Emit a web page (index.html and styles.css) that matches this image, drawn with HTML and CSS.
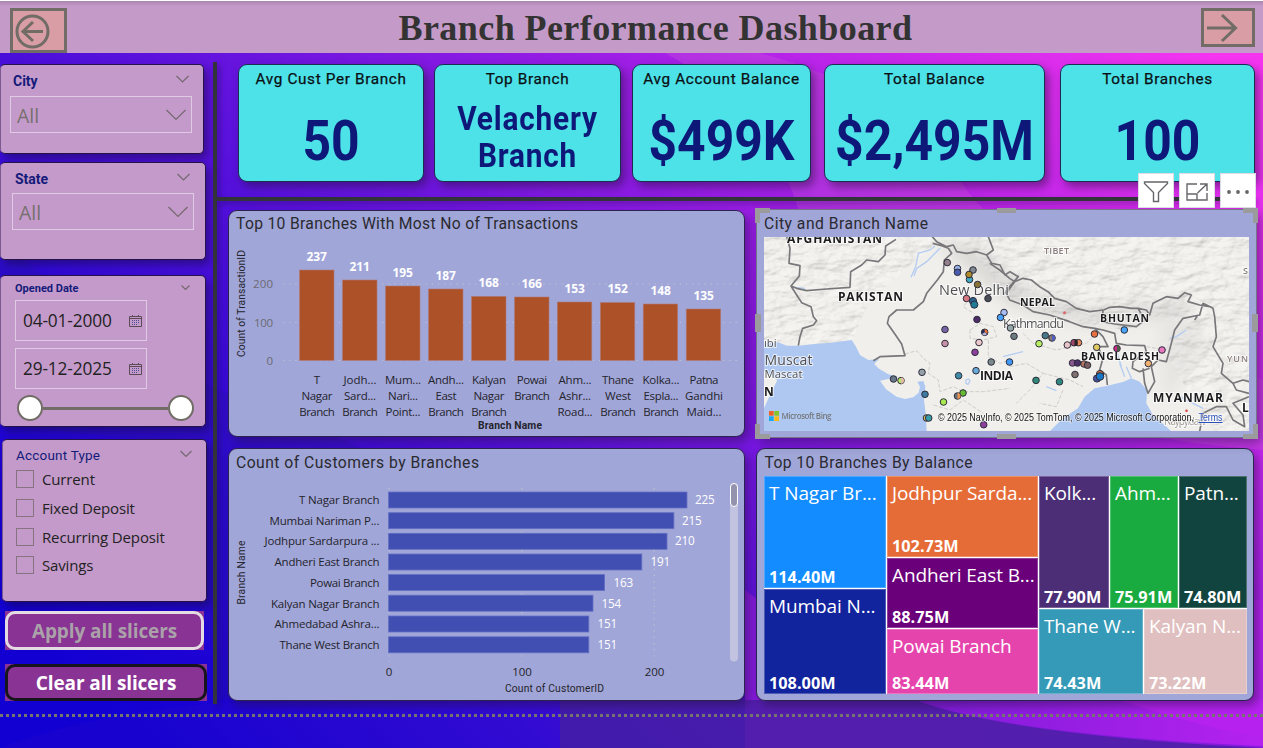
FILE: index.html
```html
<!DOCTYPE html>
<html lang="en">
<head>
<meta charset="utf-8">
<title>Branch Performance Dashboard</title>
<link rel="stylesheet" href="styles.css">
</head>
<body>
<svg class="backdrop" viewBox="0 0 1263 748" preserveAspectRatio="none">
  <defs>
    <linearGradient id="bg" gradientUnits="userSpaceOnUse" x1="150" y1="748" x2="1000" y2="-150">
      <stop offset="0" stop-color="#1200d2"/><stop offset=".22" stop-color="#3009d6"/><stop offset=".45" stop-color="#6614de"/><stop offset=".68" stop-color="#a21fe6"/><stop offset="1" stop-color="#f534f0"/>
    </linearGradient>
    <linearGradient id="wave" x1="0" y1="0" x2="1" y2="0"><stop offset="0" stop-color="#3a12c0"/><stop offset="1" stop-color="#47219c"/></linearGradient>
    <linearGradient id="glow" x1="0" y1="0" x2="1" y2="0"><stop offset="0" stop-color="#7c1bd8"/><stop offset="1" stop-color="#b522f0"/></linearGradient>
  </defs>
  <rect width="1263" height="748" fill="url(#bg)"/>
  <path d="M0 240Q80 310 213 388Q420 470 745 610L1000 700H213V650L150 440L0 425Z" fill="#2c14a8" opacity=".3"/>
  <path d="M665 53Q770 110 800 215Q880 420 1263 450V380Q1000 250 960 180Q900 90 760 53Z" fill="#d060d8" opacity=".28"/>
  <path d="M745 590Q900 710 1263 748H745Z" fill="#851bdc"/>
  <path d="M0 748Q150 690 420 700H910Q1000 735 1263 748Z" fill="url(#wave)" opacity=".12"/>
  <path d="M910 700Q1020 735 1263 746V700Z" fill="url(#glow)"/>
  <path d="M1120 700Q1180 722 1263 738V600H1120Z" fill="#b822f0" opacity=".8"/>
  <path d="M560 700H915Q1010 735 1263 748H560Z" fill="#46209f" opacity=".75"/>
</svg>

<header class="topbar">
  <button class="nav nav-back" aria-label="Back"><svg width="46" height="38" viewBox="0 0 46 38"><circle cx="19.500" cy="19.500" r="15.500"/><path d="M9.500 19.500H30M20 10L10 19.500L20 29"/></svg></button>
  <h1>Branch Performance Dashboard</h1>
  <button class="nav nav-next" aria-label="Next"><svg width="46" height="32" viewBox="0 0 46 32"><path d="M3 16H31M18 3L31.500 16L18 29"/></svg></button>
</header>

<main class="board">
  <aside class="sidebar">
    <section class="slicer city">
      <div class="slicer-head"><h2>City</h2><svg class="chev" width="13" height="8" viewBox="0 0 13 8"><path d="M.5 1L6.500 7L12.500 1"/></svg></div>
      <div class="dropdown"><span>All</span><svg class="chev" width="20" height="12" viewBox="0 0 20 12"><path d="M.5 1L10 10.500L19.500 1"/></svg></div>
    </section>
    <section class="slicer state">
      <div class="slicer-head"><h2>State</h2><svg class="chev" width="13" height="8" viewBox="0 0 13 8"><path d="M.5 1L6.500 7L12.500 1"/></svg></div>
      <div class="dropdown"><span>All</span><svg class="chev" width="20" height="12" viewBox="0 0 20 12"><path d="M.5 1L10 10.500L19.500 1"/></svg></div>
    </section>
    <section class="slicer opened">
      <div class="slicer-head"><h2>Opened Date</h2><svg class="chev" width="9" height="6" viewBox="0 0 9 6"><path d="M.5 .5L4.500 4.500L8.500 .5"/></svg></div>
      <div class="date"><span>04-01-2000</span><svg class="cal" width="13" height="12" viewBox="0 0 13 12"><path d="M.5 1.500H12.500V11.500H.5ZM.5 3.500H12.500M3.500 0V2M9.500 0V2"/><path class="dots" d="M3 5.500H11M3 7.500H11M3 9.500H9"/></svg></div>
      <div class="date"><span>29-12-2025</span><svg class="cal" width="13" height="12" viewBox="0 0 13 12"><path d="M.5 1.500H12.500V11.500H.5ZM.5 3.500H12.500M3.500 0V2M9.500 0V2"/><path class="dots" d="M3 5.500H11M3 7.500H11M3 9.500H9"/></svg></div>
      <div class="slider"><i></i><b></b><i></i></div>
    </section>
    <section class="slicer account">
      <div class="slicer-head"><h2>Account Type</h2><svg class="chev" width="12" height="8" viewBox="0 0 12 8"><path d="M.5 1L6 6.500L11.500 1"/></svg></div>
      <ul><li>Current</li><li>Fixed Deposit</li><li>Recurring Deposit</li><li>Savings</li></ul>
    </section>
    <div class="btn-wrap apply"><button><span>Apply all slicers</span></button></div>
    <div class="btn-wrap clear"><button><span>Clear all slicers</span></button></div>
  </aside>
  <div class="vline"></div>

  <div class="content">
    <div class="kpis">
      <article class="kpi k1"><h3>Avg Cust Per Branch</h3><p>50</p></article>
      <article class="kpi k2"><h3>Top Branch</h3><p class="name">Velachery<br>Branch</p></article>
      <article class="kpi k3"><h3>Avg Account Balance</h3><p>$499K</p></article>
      <article class="kpi k4"><h3>Total Balance</h3><p>$2,495M</p></article>
      <article class="kpi k5"><h3>Total Branches</h3><p>100</p></article>
    </div>
    <div class="hline"></div>
    <div class="charts">
      <section class="card">
        <svg class="plot" width="515" height="225" viewBox="229 211 515 225">
          <text class="ttl" x="236" y="229" textLength="342">Top 10 Branches With Most No of Transactions</text>
          <path class="grid" d="M283 284H738M283 322.500H738M283 360.500H738"/>
          <g class="bars-a">
            <rect x="299.500" y="270" width="34.500" height="90.500"/><rect x="342.500" y="280" width="34.500" height="80.500"/><rect x="385.500" y="286" width="34.500" height="74.500"/><rect x="428.500" y="289" width="34.500" height="71.500"/><rect x="471.500" y="296.300" width="34.500" height="64.200"/><rect x="514.500" y="297" width="34.500" height="63.500"/><rect x="557.300" y="302" width="34.500" height="58.500"/><rect x="600.300" y="302.500" width="34.500" height="58"/><rect x="643.200" y="304" width="34.500" height="56.500"/><rect x="686.200" y="309" width="34.500" height="51.500"/>
          </g>
          <g class="axis-y"><text x="273" y="288" textLength="20">200</text><text x="273" y="327" textLength="19">100</text><text x="273" y="365">0</text></g>
          <g class="vals">
            <text x="316.700" y="261">237</text><text x="359.700" y="271">211</text><text x="402.700" y="277">195</text><text x="445.700" y="280">187</text><text x="488.700" y="287">168</text><text x="531.700" y="288">166</text><text x="574.700" y="293">153</text><text x="617.700" y="293">152</text><text x="660.700" y="295">148</text><text x="703.700" y="300">135</text>
          </g>
          <g class="cats">
            <text x="317" y="384">T</text><text x="317" y="400" textLength="31">Nagar</text><text x="317" y="416" textLength="35.500">Branch</text>
            <text x="360" y="384" textLength="33">Jodh...</text><text x="360" y="400" textLength="32">Sard...</text><text x="360" y="416" textLength="35.500">Branch</text>
            <text x="403" y="384" textLength="36">Mum...</text><text x="403" y="400" textLength="30">Nari...</text><text x="403" y="416" textLength="35">Point...</text>
            <text x="446" y="384" textLength="36">Andh...</text><text x="446" y="400" textLength="21">East</text><text x="446" y="416" textLength="35.500">Branch</text>
            <text x="489" y="384" textLength="34">Kalyan</text><text x="489" y="400" textLength="31">Nagar</text><text x="489" y="416" textLength="35.500">Branch</text>
            <text x="532" y="384" textLength="30.500">Powai</text><text x="532" y="400" textLength="35.500">Branch</text>
            <text x="575" y="384" textLength="33">Ahm...</text><text x="575" y="400" textLength="32">Ashr...</text><text x="575" y="416" textLength="35">Road...</text>
            <text x="618" y="384" textLength="32">Thane</text><text x="618" y="400" textLength="26">West</text><text x="618" y="416" textLength="35.500">Branch</text>
            <text x="661" y="384" textLength="37">Kolka...</text><text x="661" y="400" textLength="35">Espla...</text><text x="661" y="416" textLength="35.500">Branch</text>
            <text x="704" y="384" textLength="29">Patna</text><text x="704" y="400" textLength="38">Gandhi</text><text x="704" y="416" textLength="35">Maid...</text>
          </g>
          <text class="axis-t" transform="translate(245 357) rotate(-90)" textLength="107">Count of TransactionID</text>
          <text class="axis-t heavy" x="478" y="429" textLength="64">Branch Name</text>
        </svg>
      </section>

      <section class="card map-card">
        <svg class="plot" width="499" height="227" viewBox="757 210 499 227">
          <defs>
            <clipPath id="view"><rect x="764" y="237" width="485" height="194"/></clipPath>
            <clipPath id="hills"><path d="M764 237H1249V431H1215L1190 395L1160 345L1190 325L1150 316L1130 330L1080 325L1010 300L975 255L940 240L870 300L850 345L764 343Z"/></clipPath>
            <filter id="relief" x="0" y="0" width="100%" height="100%"><feTurbulence type="fractalNoise" baseFrequency=".045 .09" numOctaves="4" seed="8"/><feDiffuseLighting surfaceScale="5" lighting-color="#fff"><feDistantLight azimuth="225" elevation="60"/></feDiffuseLighting></filter>
            <filter id="soft"><feGaussianBlur stdDeviation="7"/></filter>
          </defs>
          <text class="ttl" x="764" y="229" textLength="164">City and Branch Name</text>
          <g clip-path="url(#view)">
            <rect x="764" y="237" width="485" height="194" fill="#f0efeb"/>
            <g clip-path="url(#hills)"><rect x="764" y="237" width="485" height="194" filter="url(#relief)" opacity=".32"/></g>
            <g filter="url(#soft)" fill="#999" opacity=".25"><path d="M935 240L975 245L1030 290L1090 310L1190 300V315L1090 325L1010 305L965 265Z"/><path d="M1160 325L1200 320L1205 350L1165 400Z" opacity=".5"/></g>
            <g transform="translate(750 200) scale(.33333)">
              <path class="sea" d="M40 430L85 427L110 437L145 437L200 431L245 428L305 420L318 440L330 465L355 480L385 478L373 492L385 505L415 523L445 530L425 535L390 542L408 568L440 590L465 597L490 592L506 578L510 560L502 545L520 543L526 560L522 600L527 640L530 695H40V628L65 575L82 540L60 525L40 510Z"/>
              <path class="river" d="M555 138L540 150L505 160L497 200L483 232M570 145L530 185L500 205L492 228M130 262L165 265M385 478L365 488M648 540l8 -3l4 6l-6 10l-6 -3z"/>
              <path class="border faint" d="M465 462L500 452L520 475L540 490L535 520L565 540L570 575L610 560L640 575L700 575L780 565M550 615L600 630L640 600L700 640M660 390L690 370L730 380L740 410L700 420L660 415ZM715 420V470L750 490L780 480M660 295L640 320L670 340"/>
              <path class="border" d="M110 108L120 145L117 190L150 197L148 228L123 258L140 265L170 272L230 267L300 262L302 215L335 195L350 180L385 185L405 165L407 138L438 118M123 258L140 285L155 308L183 320L190 350L200 362L190 375L158 385L150 410L145 437M370 482L390 470L465 467L455 432L433 400L412 370L417 350L440 330L490 330L520 305L530 280L562 240L580 215L583 180L605 160L595 145L575 137L548 130M545 108L560 125L590 140L610 135L620 155L650 160L680 155L710 165L730 150L715 110M710 165L725 190L750 195L765 225L780 215L805 230L775 265L760 285"/>
            </g>
            <g transform="translate(1003 200) scale(.33333)">
              <path class="sea" d="M140 694L180 655L225 625L245 590L275 565L310 558L335 552L362 545L385 535L410 545L432 570L430 610L450 645L490 680L505 694Z"/>
              <path class="river" d="M350 490L365 530M370 500L385 535M340 450L355 500M550 390L520 410L500 415M0 470L60 455M530 590L600 625M130 560L160 572"/>
              <path class="border faint" d="M60 400L90 430L160 450L250 430L280 400M20 500L70 490L120 520L80 570L40 610M120 520L200 540L240 560M180 570L160 620L110 610M430 440L490 450"/>
              <path class="border" d="M-40 190L-10 210L20 235L35 245L10 280L20 300L60 315L90 335L140 345L200 365L240 380L275 385L300 390L335 400L340 430L370 435L425 437L430 455L390 485L388 505L410 515L440 505M20 260L35 245L60 235L85 240L110 260L135 275L155 295L190 305L220 325L260 335L300 330L298 365L335 372L400 380L425 360L405 325L430 330L440 345L450 310L490 290L525 295L545 278L565 285L555 305L590 315L620 320M302 330L320 322L350 320L385 325L405 325M275 385L300 410L315 440L285 440L300 475L290 510L310 525L313 555M600 310L590 345L540 355L515 390L505 430L490 485L465 480L445 500L455 545L435 580L425 550L420 505M585 345L575 360M600 310L630 325L635 350L640 410L630 440L660 490L655 520L690 550L700 570L738 580M690 550L720 540L738 545M738 590L690 610L720 645L725 680L690 660L670 620L640 620L600 640L590 694"/>
            </g>
            <g class="map-txt">
              <text class="cty" x="787" y="243" textLength="95">AFGHANISTAN</text>
              <text class="cty" x="838" y="301" textLength="65">PAKISTAN</text>
              <text class="cty" x="980" y="379.500" textLength="33">INDIA</text>
              <text class="cty sm" x="1020" y="306" textLength="35">NEPAL</text>
              <text class="cty sm" x="1100" y="322" textLength="49">BHUTAN</text>
              <text class="cty sm" x="1081" y="360" textLength="78">BANGLADESH</text>
              <text class="cty" x="1153" y="402" textLength="70">MYANMAR</text>
              <text class="cty" x="764" y="396">N</text><text class="cty" x="1242" y="412">L</text>
              <text class="reg" x="1044" y="254" textLength="25">TIBET</text><text class="reg" x="1227" y="362" textLength="21">YUN</text><text class="reg" x="1243" y="274">S</text>
              <text class="town big" x="939" y="294.500" textLength="70">New Delhi</text>
              <text class="town" x="1003" y="328" textLength="61">Kathmandu</text>
              <text class="town mid" x="764.500" y="365" textLength="48">Muscat</text>
              <text class="town sm" x="764.500" y="377.500" textLength="38">Mascat</text>
              <text class="town sm" x="764" y="347">ıbi</text>
              <text class="town faded" x="1164" y="425" textLength="42">Naypyidaw</text>
            </g>
            <circle cx="1064.500" cy="312.700" r="1.500" fill="#d66"/><circle cx="1186.500" cy="410.700" r="1.300" fill="#d44"/>
            <g class="pins">
              <circle cx="947.300" cy="262.600" r="3.300" fill="#94808a"/><circle cx="957.500" cy="268.500" r="3.300" fill="#9bb2e8"/><circle cx="957.500" cy="272.300" r="3.300" fill="#4a5bb0"/><circle cx="973" cy="270" r="3.300" fill="#7f8790"/><circle cx="969.500" cy="279.500" r="3.300" fill="#40a8c0"/><circle cx="969" cy="274.500" r="3.300" fill="#b08a28"/><circle cx="977.600" cy="284.500" r="3.300" fill="#8a7338"/>
              <circle cx="966.500" cy="298.500" r="3.300" fill="#d67780"/><circle cx="973" cy="301" r="3.600" fill="#2b6290"/><circle cx="974.300" cy="304.600" r="3.600" fill="#217a96"/><circle cx="988" cy="298.500" r="3.300" fill="#4a4e54"/><circle cx="977" cy="319.500" r="3.300" fill="#4d2c68"/><circle cx="1004" cy="312.500" r="3.300" fill="#a8bcf0"/><circle cx="1000.500" cy="317.500" r="3.300" fill="#48a0f8"/>
              <circle cx="984.700" cy="332.300" r="3.300" fill="#222c58"/><path d="M984.700 332.300V329.300A3 3 0 0 1 987.500 333.500Z" fill="#e87030"/><path d="M984.700 332.300L982 334A3 3 0 0 0 987 334Z" fill="#b8b4d0"/>
              <circle cx="945" cy="329.500" r="3.300" fill="#7863a4"/><circle cx="945" cy="343.500" r="3.300" fill="#c890a8"/><circle cx="979" cy="342.500" r="3.300" fill="#ecc8cc"/><circle cx="975" cy="352.300" r="3.300" fill="#8b409c"/><circle cx="991.200" cy="362" r="3.300" fill="#7c898c"/><circle cx="1009.500" cy="362" r="3.300" fill="#4098f8"/><circle cx="976" cy="370.700" r="3.300" fill="#68a8d8"/><circle cx="958.600" cy="375.700" r="3.300" fill="#408ca8"/>
              <circle cx="922" cy="372.300" r="3.300" fill="#96a0a8"/><circle cx="893.500" cy="379" r="3.300" fill="#667888"/><circle cx="901" cy="380.600" r="3.300" fill="#b8e868"/><path d="M901 377.500A3 3 0 0 1 901 383.700Z" fill="#e0b8a8"/><circle cx="925" cy="394.300" r="3.300" fill="#3f78a0"/><circle cx="943.500" cy="402" r="3.300" fill="#a8e850"/><circle cx="963" cy="393" r="3.300" fill="#66bc30"/><circle cx="957.500" cy="396" r="3.300" fill="#687078"/><path d="M957.500 393A3 3 0 0 1 957.500 399Z" fill="#e89050"/>
              <circle cx="926.500" cy="418" r="3.300" fill="#e0c060"/><circle cx="928.700" cy="418" r="3.300" fill="#389ca8"/><circle cx="983.700" cy="424.700" r="3.300" fill="#8b409c"/>
              <circle cx="1010.500" cy="328" r="3.300" fill="#96a8a8"/><circle cx="1014" cy="336.300" r="3.300" fill="#6c7d80"/><circle cx="1045.300" cy="335.600" r="3.300" fill="#467888"/><circle cx="1052" cy="338" r="3.300" fill="#887870"/><path d="M1052 335A3 3 0 0 1 1052 341Z" fill="#5060c0"/><circle cx="1039" cy="343.700" r="3.300" fill="#b8f060"/><circle cx="1067.300" cy="345" r="3.300" fill="#e8c4c8"/><circle cx="1078.500" cy="342.700" r="3.300" fill="#e88a58"/><circle cx="1074" cy="342.700" r="3.300" fill="#a04868"/><path d="M1074.500 339.500H1077.500V346H1074.500Z" fill="#262428"/>
              <circle cx="1094.500" cy="334" r="3.300" fill="#e87040"/><circle cx="1124.300" cy="330" r="3.300" fill="#48a4f8"/><circle cx="1096.700" cy="347.300" r="3.300" fill="#e0c860"/><circle cx="1117" cy="348.500" r="3.300" fill="#c82888"/><path d="M1117 345.500A3 3 0 0 1 1117 351.500Z" fill="#486048"/><circle cx="1162" cy="350" r="3.300" fill="#e878c0"/><circle cx="1148.300" cy="363.500" r="3.300" fill="#f0b070"/>
              <circle cx="1072.500" cy="363" r="3.300" fill="#8a5890"/><circle cx="1084" cy="364" r="3.300" fill="#b87860"/><circle cx="1077.500" cy="363" r="3.300" fill="#4c3068"/><circle cx="1087.500" cy="365.200" r="3.300" fill="#785c60"/><circle cx="1075" cy="374.500" r="3.300" fill="#807070"/><circle cx="1036" cy="380.400" r="3.300" fill="#308878"/><circle cx="1059.500" cy="381.800" r="3.300" fill="#308880"/><circle cx="1100" cy="374" r="3.600" fill="#d07040"/><circle cx="1097" cy="378.500" r="3.600" fill="#4850a0"/><circle cx="1100" cy="376.500" r="3.800" fill="#1878c8"/>
            </g>
            <g><rect x="769" y="411" width="4.700" height="4.700" fill="#f06028"/><rect x="774.300" y="411" width="4.700" height="4.700" fill="#84c428"/><rect x="769" y="416.300" width="4.700" height="4.700" fill="#18a8f0"/><rect x="774.300" y="416.300" width="4.700" height="4.700" fill="#fcb818"/></g>
            <text class="bing" x="781.500" y="419" textLength="50">Microsoft Bing</text>
            <text class="credit" x="938" y="421" textLength="256" lengthAdjust="spacingAndGlyphs">© 2025 NavInfo, © 2025 TomTom, © 2025 Microsoft Corporation,</text>
            <text class="credit link" x="1198.500" y="421" textLength="24" lengthAdjust="spacingAndGlyphs">Terms</text>
          </g>
        </svg>
        <div class="frame"><i class="tl"></i><i class="tc"></i><i class="tr"></i><i class="ml"></i><i class="mr"></i><i class="bl"></i><i class="bc"></i><i class="br"></i></div>
        <div class="tools">
          <span><svg width="26" height="22" viewBox="0 0 26 22"><path d="M1.500 1H24.500V2.500L15.500 11.500V20.500H10.500V11.500L1.500 2.500Z"/></svg></span>
          <span><svg width="22" height="18" viewBox="0 0 22 18"><path d="M11 1H1V17H21V10M1 11H11V17M14 1H21V8M20.500 1.500L11.500 10"/></svg></span>
          <span class="more"><svg width="24" height="6" viewBox="0 0 24 6"><circle cx="3" cy="3" r="1.900"/><circle cx="12" cy="3" r="1.900"/><circle cx="21" cy="3" r="1.900"/></svg></span>
        </div>
      </section>

      <section class="card">
        <svg class="plot" width="515" height="251" viewBox="229 449 515 251">
          <text class="ttl" x="236" y="468" textLength="243">Count of Customers by Branches</text>
          <path class="grid" d="M389 488V662M521.700 488V662M654.300 488V662"/>
          <g class="bars-b">
            <rect x="388.500" y="492" width="298.500" height="16"/><rect x="388.500" y="512.700" width="285.400" height="16"/><rect x="388.500" y="533.300" width="278.500" height="16"/><rect x="388.500" y="554" width="253.300" height="16"/><rect x="388.500" y="574.500" width="216.100" height="16"/><rect x="388.500" y="595.200" width="204.500" height="16"/><rect x="388.500" y="616" width="200.300" height="16"/><rect x="388.500" y="636.800" width="200.300" height="16"/>
          </g>
          <g class="names">
            <text x="379.500" y="504" textLength="80.500">T Nagar Branch</text><text x="379.500" y="525" textLength="110">Mumbai Nariman P...</text><text x="379.500" y="545" textLength="115">Jodhpur Sardarpura ...</text><text x="379.500" y="566" textLength="105">Andheri East Branch</text><text x="379.500" y="587" textLength="69.500">Powai Branch</text><text x="379.500" y="608" textLength="108.500">Kalyan Nagar Branch</text><text x="379.500" y="628" textLength="105">Ahmedabad Ashra...</text><text x="379.500" y="649" textLength="100">Thane West Branch</text>
          </g>
          <g class="nums">
            <text x="695" y="504">225</text><text x="682" y="525">215</text><text x="675" y="545">210</text><text x="650.500" y="566">191</text><text x="613.500" y="587">163</text><text x="601.500" y="608">154</text><text x="597.500" y="628">151</text><text x="597.500" y="649">151</text>
          </g>
          <g class="ticks"><text x="389" y="676">0</text><text x="522" y="676">100</text><text x="654.500" y="676">200</text></g>
          <text class="axis-t" x="505" y="692" textLength="99">Count of CustomerID</text>
          <text class="axis-t" transform="translate(245 604.500) rotate(-90)" textLength="64">Branch Name</text>
          <rect x="730" y="483" width="8" height="178.500" rx="4" fill="#c1c3e0"/><rect x="730.500" y="483.500" width="7" height="23" rx="3.500" fill="#9393ae" stroke="#fff"/>
        </svg>
      </section>

      <section class="card tree-card">
        <svg class="tree-title" width="300" height="26" viewBox="757 449 300 26"><text class="ttl" x="764.500" y="468" textLength="208">Top 10 Branches By Balance</text></svg>
        <div class="tree">
          <div class="col c1">
            <div class="cell t1"><span>T Nagar Br...</span><b>114.40M</b></div>
            <div class="cell t2"><span>Mumbai N...</span><b>108.00M</b></div>
          </div>
          <div class="col c2">
            <div class="cell t3"><span>Jodhpur Sarda...</span><b>102.73M</b></div>
            <div class="cell t4"><span>Andheri East B...</span><b>88.75M</b></div>
            <div class="cell t5"><span>Powai Branch</span><b>83.44M</b></div>
          </div>
          <div class="col c3">
            <div class="line l1">
              <div class="cell t6"><span>Kolk...</span><b>77.90M</b></div>
              <div class="cell t7"><span>Ahm...</span><b>75.91M</b></div>
              <div class="cell t8"><span>Patn...</span><b>74.80M</b></div>
            </div>
            <div class="line l2">
              <div class="cell t9"><span>Thane W...</span><b>74.43M</b></div>
              <div class="cell t10"><span>Kalyan N...</span><b>73.22M</b></div>
            </div>
          </div>
        </div>
      </section>
    </div>
  </div>
</main>
<div class="dotted"></div>
</body>
</html>
```
FILE: styles.css
```css
* { box-sizing: border-box; margin: 0; padding: 0; }
body { width: 1263px; height: 748px; overflow: hidden; position: relative; background: #1a02d4; font-family: "Open Sans", "Noto Sans", sans-serif; }
button { font: inherit; border: 0; }
svg { display: block; flex: none; }
.backdrop { position: absolute; inset: 0; width: 1263px; height: 748px; z-index: -1; }

.topbar { display: flex; align-items: flex-start; height: 53px; border-top: 1px solid #fff; background: linear-gradient(#a985ae, #c49ac8 5px); }
.topbar h1 { flex: 1; text-align: center; font: bold 36px/54px "Liberation Serif", serif; letter-spacing: .430px; color: #333; padding-left: 43px; white-space: nowrap; }
.nav { background: #d99da6; border: 3px solid #716c66; margin-top: 7px; }
.nav svg { fill: none; stroke: #716c66; stroke-width: 3; }
.nav-back { width: 57px; height: 45px; margin-left: 10px; }
.nav-next { width: 54px; height: 39px; margin-right: 8px; }

.board { display: flex; height: 662px; }
.sidebar { width: 213px; padding-top: 11px; }
.slicer { background: #c49aca; border: 1px solid #24124a; border-left-color: #7a5a90; border-radius: 5px; box-shadow: 4px 5px 9px rgba(20, 10, 50, .45); color: #222; }
.slicer-head { display: flex; justify-content: space-between; align-items: flex-start; }
.slicer h2 { font: bold 14px/18px Roboto, sans-serif; color: #141a7a; }
.chev { fill: none; stroke: #74696f; stroke-width: 1.200; }
.city { width: 204px; height: 90px; padding: 7px 14px 0 12px; }
.state { width: 206px; height: 98px; margin-top: 8px; padding: 7px 15px 0 14px; }
.slicer-head .chev { margin-top: 3px; }
.dropdown { display: flex; justify-content: space-between; align-items: center; width: 182px; height: 37px; margin: 6px 0 0 -3px; padding: 0 5px 0 6px; border: 1px solid #dfcbe3; font-size: 19.500px; color: #77706f; }
.state .dropdown { margin-top: 5px; }
.dropdown span { padding-top: 2px; }
.opened { width: 206px; height: 152px; margin-top: 15px; padding: 5px 14px 0 14px; }
.opened h2 { font-size: 11px; line-height: 16px; }
.opened .slicer-head { padding-right: 1px; }
.opened .chev { margin-top: 4px; }
.date { display: flex; justify-content: space-between; align-items: center; width: 132px; height: 41px; margin-top: 3px; padding: 0 4px 0 7px; border: 1px solid #dfcbe3; font-size: 17.300px; letter-spacing: -.15px; }
.date + .date { margin-top: 7px; }
.cal { fill: none; stroke: #5d4c58; }
.cal .dots { stroke-dasharray: 1 1; stroke: #4a4f90; }
.slider { display: flex; align-items: center; margin: 6px 0 0 2px; width: 177px; }
.slider i { width: 26px; height: 26px; border-radius: 50%; border: 2px solid #716c66; background: #fff; }
.slider b { flex: 1; height: 3px; background: #716c66; }
.account { width: 205px; height: 163px; margin: 12px 0 0 2px; padding: 7px 14px 0 14px; }
.account h2 { font-weight: 400; letter-spacing: .2px; font-size: 13.500px; line-height: 16px; margin-left: -1px; }
.account ul { list-style: none; margin-top: 5px; }
.account li { display: flex; align-items: center; height: 28.700px; gap: 8px; font-size: 15px; line-height: 20px; padding-bottom: 6px; letter-spacing: -.15px; }
.account li::before { content: ""; width: 16px; height: 16px; border: 1px solid #857480; margin-left: -1px; }
.btn-wrap { background: #8a3296; width: 199px; height: 39px; margin: 9px 0 0 5px; }
.btn-wrap.clear { width: 202px; height: 37px; margin-top: 14px; }
.btn-wrap button { width: 100%; height: 100%; border-radius: 10px; background: #893394; border: 3px solid #e4dce2; color: #aaa2a8; font-weight: 700; font-size: 19px; letter-spacing: -.1px; }
.btn-wrap.clear button { border-color: #17141c; color: #fff; }

.vline { width: 4px; height: 642px; margin-top: 9px; background: #33333a; box-shadow: 3px 3px 5px rgba(30, 10, 60, .35); }
.content { flex: 1; }
.kpis { display: flex; height: 144px; padding: 11px 0 0 21px; }
.kpi { height: 118px; border: 1px solid #1c2c50; border-radius: 9px; background: #4de1e8; box-shadow: 4px 5px 10px rgba(35, 15, 60, .5); text-align: center; }
.k1 { width: 186px; } .k2 { width: 187px; margin-left: 10px; } .k3 { width: 179px; margin-left: 11px; } .k4 { width: 221px; margin-left: 13px; } .k5 { width: 195px; margin-left: 15px; }
.kpi h3 { font: 400 15.300px/18px Roboto, sans-serif; letter-spacing: .65px; color: #0a0f14; margin: 5px -4px 0; -webkit-text-stroke: .25px #0a0f14; white-space: nowrap; }
.kpi p { font: bold 56px/60px Roboto, sans-serif; color: #0d1879; margin: 23px -20px 0; transform: scaleX(.89); }
.kpi .name { font-size: 33.500px; line-height: 37px; margin-top: 12px; letter-spacing: .9px; }
.hline { height: 4px; margin-right: 8px; background: #33333a; box-shadow: 3px 3px 5px rgba(30, 10, 60, .35); }
.charts { display: grid; grid-template: 227px 253px / 518px 1fr; gap: 11px 10px; padding: 9px 0 0 11px; }
.card { border: 1px solid #2b2250; border-radius: 9px; background: #a1a6d8; box-shadow: 4px 5px 10px rgba(35, 15, 60, .45); width: 517px; }
.map-card { width: 501px; height: 229px; border-radius: 0; border-color: #77748a; position: relative; margin-top: -1px; }
.tree-card { width: 498px; }

.ttl { font: 15.700px Roboto, sans-serif; fill: #2a2a30; }
.grid { stroke: #c3c2cf; stroke-width: 1.200; stroke-dasharray: 1.200 5; fill: none; }
.bars-a { fill: #ad5128; stroke: #b17a78; stroke-width: .6; }
.bars-b { fill: #414fb2; stroke: #6470c2; stroke-width: .8; }
.axis-y { font-size: 11.500px; fill: #6a6a72; text-anchor: end; }
.vals { font-size: 12px; font-weight: 700; fill: #fff; text-anchor: middle; }
.cats { font-size: 11.500px; fill: #24242c; text-anchor: middle; }
.names { font-size: 11.500px; fill: #24242c; text-anchor: end; }
.nums { font-size: 11.700px; fill: #fff; letter-spacing: -.2px; }
.ticks { font-size: 11.500px; fill: #24242c; text-anchor: middle; }
.axis-t { font: 10.300px Roboto, sans-serif; fill: #24242c; }
.axis-t.heavy { font-weight: 700; }

.sea { fill: #aec8f2; }
.river { fill: none; stroke: #b4ccf2; stroke-width: 4; }
.border { fill: none; stroke: #77777a; stroke-width: 5; stroke-linejoin: round; }
.border.faint { stroke: #cfcdca; stroke-width: 3; stroke-dasharray: 12 5; }
.map-txt text { paint-order: stroke; stroke: rgba(255, 255, 255, .7); stroke-width: 2px; }
.cty { font-size: 12px; font-weight: 700; fill: #1c1c1e; }
.cty.sm { font-size: 10.500px; }
.reg { font-size: 9px; fill: #8b7f7f; font-weight: 600; }
.town { font-size: 12.500px; fill: #505054; }
.town.big { font-size: 14.500px; } .town.mid { font-size: 14px; } .town.sm { font-size: 11.300px; } .town.faded { fill: #99958f; font-size: 10px; }
.pins circle { stroke: #2b2b3a; stroke-width: 1; }
.bing { font-size: 8px; fill: #77797c; font-weight: 600; }
.credit { font: 10px "Liberation Sans", sans-serif; fill: #111; paint-order: stroke; stroke: rgba(255, 255, 255, .6); stroke-width: 1.500px; }
.credit.link { fill: #2a50b8; text-decoration: underline; }

.frame { position: absolute; inset: -2px; }
.frame i { position: absolute; border: 0 solid #9b9b9d; }
.frame .tl { left: 0; top: 0; width: 15px; height: 15px; border-width: 5px 0 0 5px; }
.frame .tr { right: 0; top: 0; width: 15px; height: 15px; border-width: 5px 5px 0 0; }
.frame .bl { left: 0; bottom: 0; width: 15px; height: 15px; border-width: 0 0 5px 5px; }
.frame .br { right: 0; bottom: 0; width: 15px; height: 15px; border-width: 0 5px 5px 0; }
.frame .tc { left: 242px; top: 0; width: 19px; border-top-width: 5px; }
.frame .bc { left: 242px; bottom: 0; width: 19px; border-top-width: 5px; }
.frame .ml { left: 0; top: 106px; height: 18px; border-left-width: 6px; }
.frame .mr { right: 0; top: 106px; height: 18px; border-left-width: 6px; }
.tools { position: absolute; right: 0; top: -37px; display: flex; gap: 5px; }
.tools span { width: 36px; height: 35px; background: #fff; border: 1px solid #dedbe4; display: grid; place-items: center; }
.tools svg { fill: none; stroke: #66666a; stroke-width: 1.400; margin-top: 3px; }
.tools .more svg { fill: #66666a; stroke: none; }

.tree { display: flex; gap: 1px; width: 483px; height: 218px; margin: 1px 0 0 7px; background: #fff; }
.col { display: flex; flex-direction: column; gap: 1px; }
.c1 { width: 122px; } .c2 { width: 151px; } .c3 { width: 208px; }
.line { display: flex; gap: 1px; }
.l1 { height: 132px; } .l2 { height: 85px; }
.cell { display: flex; flex-direction: column; justify-content: space-between; padding: 3px 0 1px 5px; color: #fff; overflow: hidden; white-space: nowrap; box-shadow: inset 0 0 0 1px rgba(255, 255, 255, .25); }
.cell span { font-size: 19px; line-height: 28px; letter-spacing: -.1px; }
.cell b { font-size: 16.300px; line-height: 19px; }
.t1 { background: #128cff; height: 112px; } .t2 { background: #12239e; height: 105px; }
.t3 { background: #e66c37; height: 81px; } .t4 { background: #6b007b; height: 70px; } .t5 { background: #e644ad; height: 65px; }
.t6 { background: #4b2e76; width: 70px; } .t7 { background: #1aab40; width: 68px; } .t8 { background: #12443f; width: 68px; }
.t9 { background: #3599b8; width: 104px; } .t10 { background: #dfbfbf; width: 103px; }

.dotted { height: 3px; margin-top: -1px; background: repeating-linear-gradient(90deg, #77756f 0 3px, transparent 3px 6px); }
```
